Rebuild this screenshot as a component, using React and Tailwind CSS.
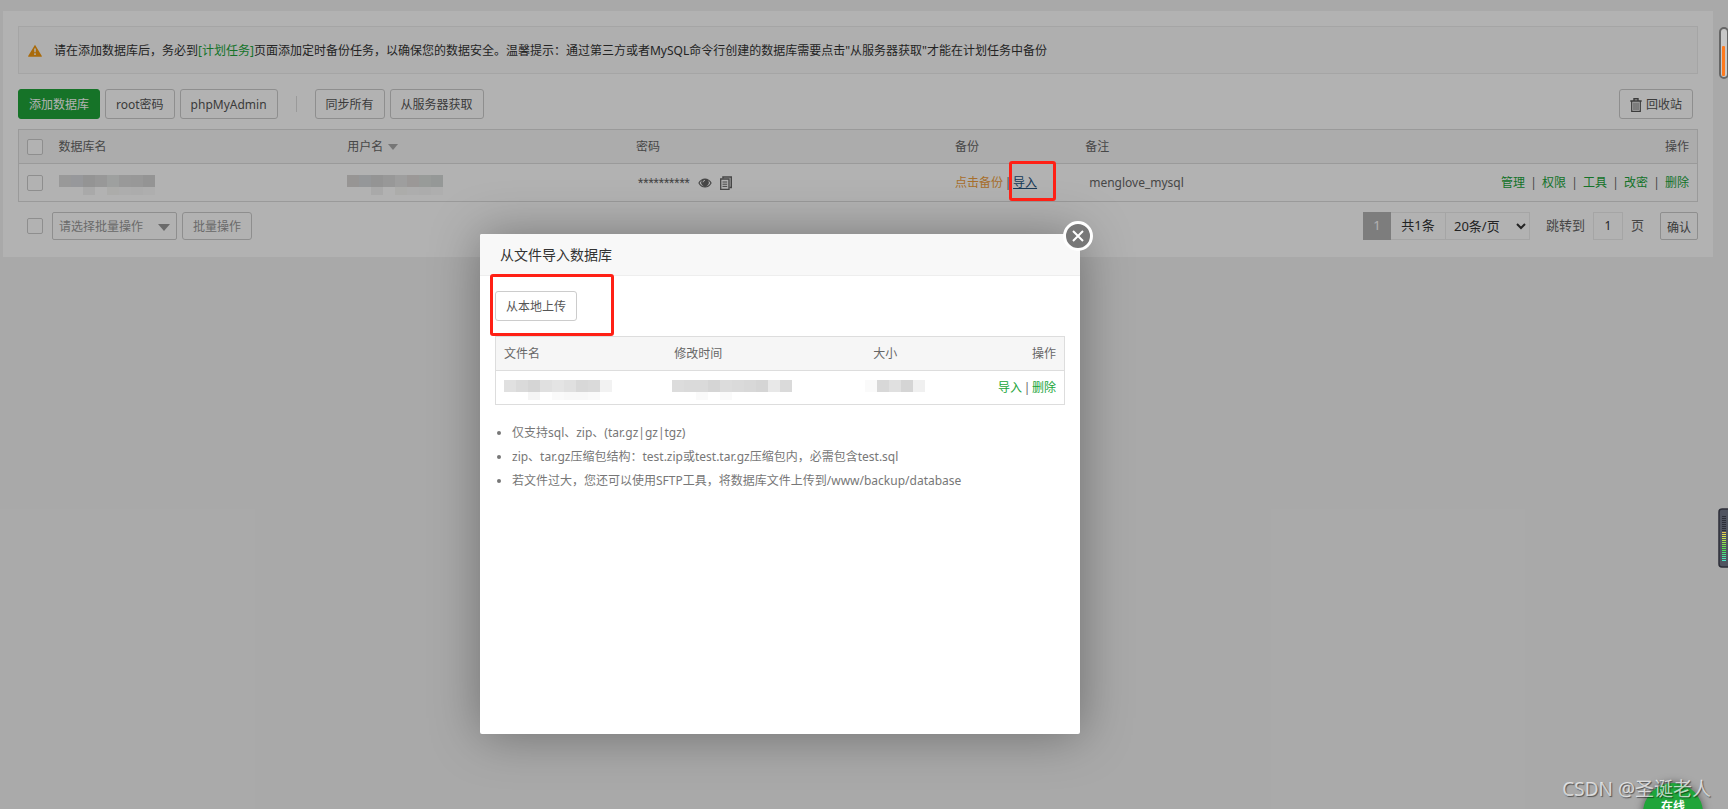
import React from "react";

const btn =
  "h-[30px] rounded-[3px] border border-[#ccc] bg-white px-2.5 pt-0.5 text-[12px] leading-none text-[#555] whitespace-nowrap";

function WarningIcon() {
  return (
    <svg viewBox="0 0 16 14" className="h-[13px] w-[14px] shrink-0" aria-hidden="true">
      <path d="M8 0.3 15.8 13.4a.4.4 0 0 1-.4.6H.6a.4.4 0 0 1-.4-.6Z" fill="#f39a12" />
      <path d="M7 4.6h2l-.3 4.4H7.3Z M7.1 10.2h1.8v1.8H7.1Z" fill="#fff" />
    </svg>
  );
}

function TrashIcon() {
  return (
    <svg viewBox="0 0 12 14" className="h-[14px] w-3" fill="none" stroke="#555" aria-hidden="true">
      <path d="M0.300 3h11.400M4 2.800V.800h4v2" strokeWidth="1.400" />
      <path d="M1.700 3v10.300h8.600V3" strokeWidth="1.200" />
      <path d="M4 4.500v7.500M6 4.500v7.500M8 4.500v7.500" strokeWidth=".9" />
    </svg>
  );
}

function EyeIcon() {
  return (
    <svg viewBox="0 0 14 10" className="h-2.5 w-3.5" aria-hidden="true">
      <path d="M.3 5C1.8 2 4.2.4 7 .4S12.200 2 13.700 5C12.200 8 9.800 9.600 7 9.600S1.800 8 .3 5Z" fill="#666" />
      <path d="M4.200 2.200a3.700 3.700 0 1 0 5.600 0A5.500 5.500 0 0 1 12.400 5C11.200 7.200 9.300 8.500 7 8.500S2.800 7.200 1.600 5A5.500 5.500 0 0 1 4.200 2.200Z" fill="#fff" />
      <path d="M5 4.300A2 2 0 0 1 7 2.400" fill="none" stroke="#fff" strokeWidth=".9" />
    </svg>
  );
}

function CopyIcon() {
  return (
    <svg viewBox="0 0 12 14" className="h-3.5 w-3" fill="none" stroke="#666" aria-hidden="true">
      <path d="M3 2.500V1h8.300v10.500H9.500" strokeWidth="1.500" />
      <path d="M.7 3h8.300v10.300H.7Z" strokeWidth="1.300" />
      <path d="M2.500 6h4.700M2.500 8.200h4.700M2.500 10.400h4.700" />
    </svg>
  );
}

function Mosaic({ colors, below = [] }) {
  return (
    <svg
      width={colors.length * 12}
      height="20"
      viewBox={`0 0 ${colors.length * 12} 20`}
      className="block"
      aria-hidden="true"
    >
      {colors.map((c, i) => (
        <rect key={i} x={i * 12} y="0" width="12" height="12" fill={c} />
      ))}
      {below.map(([i, c]) => (
        <rect key={i} x={i * 12} y="12" width="12" height="8" fill={c} />
      ))}
    </svg>
  );
}

function Check({ label }) {
  return (
    <input
      type="checkbox"
      aria-label={label}
      className="block size-4 appearance-none rounded-[2px] border border-[#ccc] bg-white"
    />
  );
}

function Alert() {
  return (
    <div className="flex h-12 items-center gap-3 border border-[#ececec] bg-[#fbfbfb] px-[9px] text-[12px] text-[#333]">
      <WarningIcon />
      <p className="pt-0.5">
        请在添加数据库后，务必到
        <a href="#tasks" className="text-[#20a53a]">[计划任务]</a>
        页面添加定时备份任务，以确保您的数据安全。温馨提示：通过第三方或者MySQL命令行创建的数据库需要点击"从服务器获取"才能在计划任务中备份
      </p>
    </div>
  );
}

function Toolbar() {
  return (
    <div className="mt-[15px] flex items-center gap-[5px] pr-[5px]">
      <button className="h-[30px] rounded-[3px] border border-[#20a53a] bg-[#20a53a] px-2.5 pt-0.5 text-[12px] leading-none text-white">
        添加数据库
      </button>
      <button className={btn}>root密码</button>
      <button className={btn}>phpMyAdmin</button>
      <span className="mx-[13px] h-4 w-px bg-[#ddd]" />
      <button className={btn}>同步所有</button>
      <button className={btn}>从服务器获取</button>
      <button className={btn + " ml-auto flex items-center gap-1"}>
        <TrashIcon />
        回收站
      </button>
    </div>
  );
}

const dbName = ["#dcdcdc", "#d8dade", "#d5d5d5", "#dadada", "#e2e6e4", "#dcdcdc", "#dadada", "#d5d5d5"];
const userName = ["#d8d6d4", "#d6d8dc", "#d5d5d5", "#dadada", "#e2e2e2", "#dedad8", "#dadedc", "#d6dad8"];
const under = [[2, "#f2f2f2"], [4, "#f6f6f4"], [5, "#f8f8f8"], [6, "#f6f6f6"], [7, "#fafafa"]];

function DatabaseTable() {
  const actions = ["管理", "权限", "工具", "改密", "删除"];
  return (
    <table className="mt-2.5 w-full table-fixed border-collapse border border-[#ddd] text-left text-[12px] text-[#666]">
      <colgroup>
        <col className="w-8" />
        <col className="w-[17.2%]" />
        <col className="w-[17.2%]" />
        <col className="w-[19%]" />
        <col className="w-[7.75%]" />
        <col />
        <col className="w-[18%]" />
      </colgroup>
      <thead>
        <tr className="h-[34px] border-b border-[#ddd] bg-[#f6f6f6]">
          <th className="pl-2 font-normal"><Check label="全选" /></th>
          <th className="pl-2 font-normal">数据库名</th>
          <th className="pl-2 font-normal">
            <span className="flex items-center gap-[5px]">
              用户名
              <svg viewBox="0 0 10 6" className="h-1.5 w-2.5" aria-hidden="true">
                <path d="M0 0h10L5 6Z" fill="#aaa" />
              </svg>
            </span>
          </th>
          <th className="pl-2 font-normal">密码</th>
          <th className="pl-2 font-normal">备份</th>
          <th className="pl-2 font-normal">备注</th>
          <th className="pr-2 text-right font-normal">操作</th>
        </tr>
      </thead>
      <tbody>
        <tr className="h-[38px]">
          <td className="pl-2"><Check label="选择数据库" /></td>
          <td className="pt-1 pl-2"><Mosaic colors={dbName} below={under} /></td>
          <td className="pt-1 pl-2"><Mosaic colors={userName} below={under} /></td>
          <td className="pl-2.5">
            <span className="flex items-center gap-2">
              <span className="font-['Roboto',sans-serif]">**********</span>
              <button aria-label="显示密码"><EyeIcon /></button>
              <button aria-label="复制密码"><CopyIcon /></button>
            </span>
          </td>
          <td className="pl-2">
            <span className="flex">
              <a href="#backup" className="text-[#f0a040]">点击备份</a>
              <span className="flex w-2.5 justify-center">|</span>
              <a href="#import" className="text-[#23527c] underline">导入</a>
            </span>
          </td>
          <td className="pl-3">menglove_mysql</td>
          <td className="pr-2">
            <span className="flex justify-end gap-1.5">
              {actions.map((a, i) => (
                <React.Fragment key={a}>
                  {i > 0 && <span className="flex w-[5px] justify-center">|</span>}
                  <a href="#action" className="text-[#20a53a]">{a}</a>
                </React.Fragment>
              ))}
            </span>
          </td>
        </tr>
      </tbody>
    </table>
  );
}

function Footer() {
  return (
    <div className="mt-2.5 flex h-7 items-center pl-[9px] text-[12px] text-[#555]">
      <Check label="批量选择" />
      <button className="ml-[9px] flex h-7 w-[125px] items-center justify-between rounded-[2px] border border-[#ccc] px-1.5 pt-0.5 text-[#999]">
        请选择批量操作
        <svg viewBox="0 0 12 7" className="h-[7px] w-3" aria-hidden="true">
          <path d="M0 0h12L6 7Z" fill="#999" />
        </svg>
      </button>
      <button className="ml-[5px] h-7 rounded-[3px] border border-[#ccc] px-2.5 pt-0.5 leading-none text-[#999]">批量操作</button>
      <div className="ml-auto flex h-7 items-stretch text-[13px] text-[#333]">
        <span className="flex w-7 items-center justify-center bg-[#b4b4b4] text-white">1</span>
        <span className="flex w-[55px] items-center justify-center border-y border-r border-[#ececec]">共1条</span>
        <span className="flex w-[84px] items-center border-y border-r border-[#ececec]">
          <select aria-label="每页条数" className="h-full w-full bg-transparent px-1 text-[13px]" defaultValue="20">
            <option value="20">20条/页</option>
          </select>
        </span>
        <label htmlFor="page" className="ml-4 leading-[26px] text-[#666]">跳转到</label>
        <input
          id="page"
          defaultValue="1"
          className="mx-2 w-[30px] border border-[#ececec] bg-transparent text-center text-[12px]"
        />
        <span className="leading-[26px] text-[#666]">页</span>
        <button className="ml-4 w-[38px] rounded-[2px] border border-[#ccc] pt-1 text-[12px] leading-none text-[#555]">确认</button>
      </div>
    </div>
  );
}

function ImportDialog() {
  return (
    <section
      role="dialog"
      aria-label="从文件导入数据库"
      className="absolute top-[234px] left-[480px] h-[500px] w-[600px] rounded-[2px] bg-white text-[12px] text-[#666] shadow-[1px_1px_50px_rgba(0,0,0,0.35)]"
    >
      <h2 className="h-[42px] rounded-t-[2px] border-b border-[#eee] bg-[#f8f8f8] px-5 text-[14px] leading-[42px] text-[#333]">
        从文件导入数据库
      </h2>
      <button
        aria-label="关闭"
        className="absolute -top-[13px] -right-[13px] flex size-[30px] items-center justify-center rounded-full border-[3px] border-white bg-[#787878]"
      >
        <svg viewBox="0 0 12 12" className="size-3" fill="none" stroke="#fff" strokeWidth="2" aria-hidden="true">
          <path d="M1 1 11 11M11 1 1 11" />
        </svg>
      </button>
      <div className="p-[15px]">
        <button className={btn}>从本地上传</button>
        <table className="mt-[15px] w-full table-fixed border-collapse border border-[#ddd] text-left">
          <colgroup>
            <col className="w-[30%]" />
            <col className="w-[35%]" />
            <col className="w-[15%]" />
            <col />
          </colgroup>
          <thead>
            <tr className="h-[34px] border-b border-[#ddd] bg-[#f6f6f6]">
              <th className="pl-2 font-normal">文件名</th>
              <th className="pl-2 font-normal">修改时间</th>
              <th className="pl-2 font-normal">大小</th>
              <th className="pr-2 text-right font-normal">操作</th>
            </tr>
          </thead>
          <tbody>
            <tr className="h-[34px]">
              <td className="pt-1 pl-2">
                <Mosaic
                  colors={["#e0e0e0", "#dadada", "#d5d5d5", "#e0e0e0", "#e4e4e4", "#e0e0e0", "#d8d8d8", "#dadada", "#f2f2f2"]}
                  below={[[2, "#f5f5f5"], [4, "#fafafa"], [5, "#f8f8f8"], [6, "#f8f8f8"], [7, "#fafafa"]]}
                />
              </td>
              <td className="pt-1 pl-1.5">
                <Mosaic
                  colors={["#dcdcdc", "#dadada", "#dadada", "#d5d5d5", "#dcdcdc", "#dadada", "#d8d8d8", "#d5d5d5", "#e8e8e8", "#dadada"]}
                  below={[[2, "#fafafa"], [4, "#fafafa"]]}
                />
              </td>
              <td className="pt-1">
                <Mosaic colors={["#fafafa", "#d8d8d8", "#e0e0e0", "#d5d5d5", "#f0f0f0"]} />
              </td>
              <td className="pr-2">
                <span className="flex justify-end">
                  <a href="#import-file" className="text-[#20a53a]">导入</a>
                  <span className="flex w-2.5 justify-center">|</span>
                  <a href="#delete-file" className="text-[#20a53a]">删除</a>
                </span>
              </td>
            </tr>
          </tbody>
        </table>
        <ul className="mt-4 list-disc pl-[17px] leading-6 text-[#777]">
          <li>仅支持sql、zip、(tar.gz|gz|tgz)</li>
          <li>zip、tar.gz压缩包结构：test.zip或test.tar.gz压缩包内，必需包含test.sql</li>
          <li>若文件过大，您还可以使用SFTP工具，将数据库文件上传到/www/backup/database</li>
        </ul>
      </div>
    </section>
  );
}

function EdgeGadgets() {
  const bars = Array.from({ length: 23 }, (_, i) => i);
  const tone = (i) => {
    if (i < 8) return "#2c2e38";
    const t = (i - 8) / 14;
    return `hsl(${48 + t * 120} 75% 60%)`;
  };
  return (
    <>
      <svg viewBox="0 0 9 52" className="absolute top-[27px] right-0 h-[52px] w-[9px]" aria-hidden="true">
        <rect x="1" y="1" width="8" height="50" rx="4" fill="#c8c8c8" stroke="#666" strokeWidth="2" />
        <rect x="3" y="19" width="3" height="30" rx="1" fill="#ff7a1e" />
      </svg>
      <svg viewBox="0 0 10 60" className="absolute top-[508px] right-0 h-[60px] w-2.5" aria-hidden="true">
        <rect x="1" y="1" width="16" height="58" rx="3" fill="#505460" stroke="#2c2e38" strokeWidth="1.500" />
        {bars.map((i) => (
          <rect key={i} x="4" y={8 + i * 2} width="4" height="1" fill={tone(i)} />
        ))}
      </svg>
    </>
  );
}

export default function App() {
  return (
    <div className="relative h-screen overflow-hidden bg-[#f3f3f3] pt-[11px] pr-[15px] pl-[3px] font-['Noto_Sans','Noto_Sans_CJK_SC',sans-serif] text-[12px]">
      <main className="bg-white p-[15px] pb-[17px]">
        <Alert />
        <Toolbar />
        <DatabaseTable />
        <Footer />
      </main>
      <div className="absolute inset-0 bg-black/30" />
      <ImportDialog />
      <div className="absolute top-[161px] left-[1009px] h-10 w-[47px] rounded-[3px] border-[3px] border-[#ff2015]" />
      <div className="absolute top-[274px] left-[490px] h-[62px] w-[124px] rounded-[3px] border-[3px] border-[#ff2015]" />
      <EdgeGadgets />
      <button className="absolute right-[25px] -bottom-[34px] flex size-[60px] justify-center rounded-full bg-[#20a53a] pt-4 text-[12px] leading-4 font-bold text-white shadow-[0_0_8px_rgba(0,0,0,0.5)]">
        在线
      </button>
      <p className="absolute right-[17px] bottom-2 text-[19px] leading-6 text-white/70 [text-shadow:1px_1px_1px_rgba(0,0,0,0.5)]">
        CSDN @圣诞老人
      </p>
    </div>
  );
}
